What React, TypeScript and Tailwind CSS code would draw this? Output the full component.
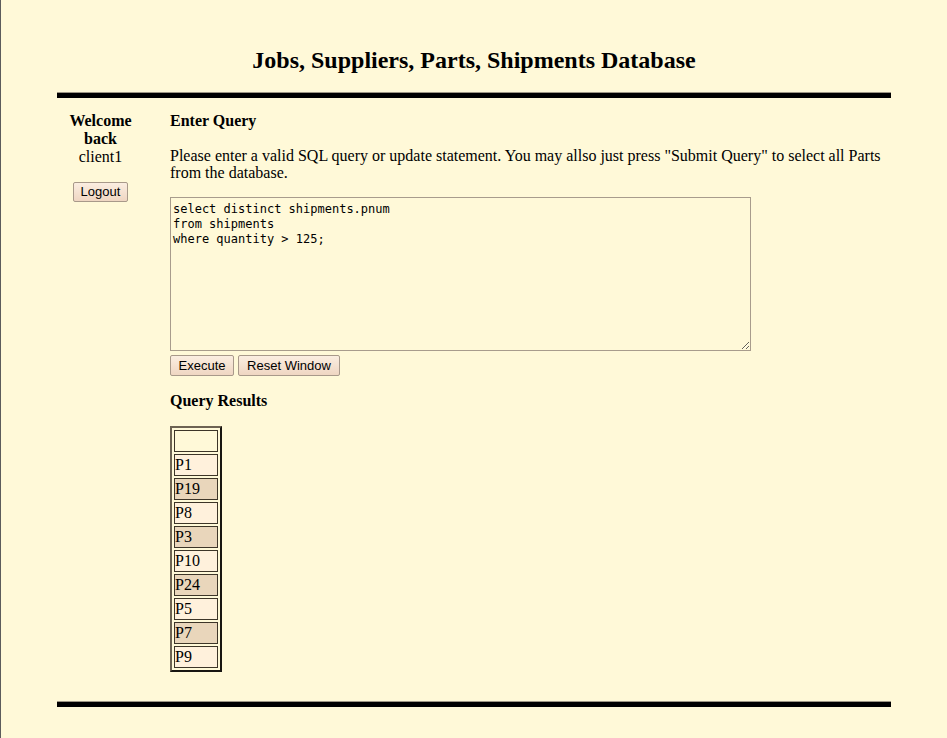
import { useState } from 'react';

const parts = ['P1', 'P19', 'P8', 'P3', 'P10', 'P24', 'P5', 'P7', 'P9'];

const defaultQuery = 'select distinct shipments.pnum\nfrom shipments\nwhere quantity > 125;';

export default function App() {
  const [query, setQuery] = useState(defaultQuery);

  return (
    <div className="min-h-screen bg-[#fff9d8] border-l border-[#5c5c5c] font-['Liberation_Serif',serif] text-[16px] text-black pt-[45px] pb-[30px]">
      {/* titulo */}
      <h1 className="text-center text-[24px] font-bold leading-[30px]">
        Jobs, Suppliers, Parts, Shipments Database
      </h1>

      <div className="ml-[56px] mr-[56px] mt-[17px]">
        <div className="h-[6px] bg-black border-t border-[#9c9584]" />

        <div className="flex pt-[14px]">
          {/* columna izquierda */}
          <div className="w-[87px] shrink-0 text-center leading-[18px]">
            <div className="font-bold">Welcome back</div>
            <div>client1</div>
            <button className="mt-[16px] h-[20px] px-[7px] rounded-[2px] border border-[#a8998a] bg-gradient-to-b from-[#fbeee1] to-[#efd6c2] font-['Liberation_Sans',sans-serif] text-[13px] leading-[18px]">
              Logout
            </button>
          </div>

          {/* columna principal */}
          <div className="flex-1 ml-[26px]">
            <h2 className="font-bold leading-[18px]">Enter Query</h2>
            <p className="mt-[17px] leading-[17px] pr-[2px]">
              Please enter a valid SQL query or update statement. You may allso just press "Submit Query" to select all Parts from the database.
            </p>

            <textarea
              value={query}
              onChange={(e) => setQuery(e.target.value)}
              spellCheck={false}
              className="mt-[16px] block w-[581px] h-[154px] border border-[#a89c8c] bg-[#fff9d8] px-[2px] pt-[4px] pb-[3px] font-['DejaVu_Sans_Mono',monospace] text-[12px] leading-[15px] outline-none"
            />

            <div className="flex gap-[4px] mt-[4px] font-['Liberation_Sans',sans-serif] text-[13px]">
              <button className="h-[21px] w-[64px] rounded-[2px] border border-[#a8998a] bg-gradient-to-b from-[#fbeee1] to-[#efd6c2] leading-[19px]">
                Execute
              </button>
              <button className="h-[21px] w-[102px] rounded-[2px] border border-[#a8998a] bg-gradient-to-b from-[#fbeee1] to-[#efd6c2] leading-[19px]">
                Reset Window
              </button>
            </div>

            <h2 className="mt-[16px] font-bold leading-[18px]">Query Results</h2>

            <table className="mt-[16px] border-separate border-spacing-[2px] border-2 [border-style:outset] border-[#6d6352]">
              <tbody>
                <tr>
                  <td className="w-[44px] h-[22px] p-0 border border-[#3d3528] bg-[#fff9d8]" />
                </tr>
                {parts.map((p, i) => (
                  <tr key={p}>
                    <td
                      className={`w-[44px] h-[22px] px-0 py-0 border border-[#3d3528] leading-[20px] ${
                        i % 2 === 0 ? 'bg-[#fff1dc]' : 'bg-[#e9d6bb]'
                      }`}
                    >
                      {p}
                    </td>
                  </tr>
                ))}
              </tbody>
            </table>
          </div>
        </div>

        <div className="mt-[29px] h-[6px] bg-black border-t border-[#9c9584]" />
      </div>
    </div>
  );
}
